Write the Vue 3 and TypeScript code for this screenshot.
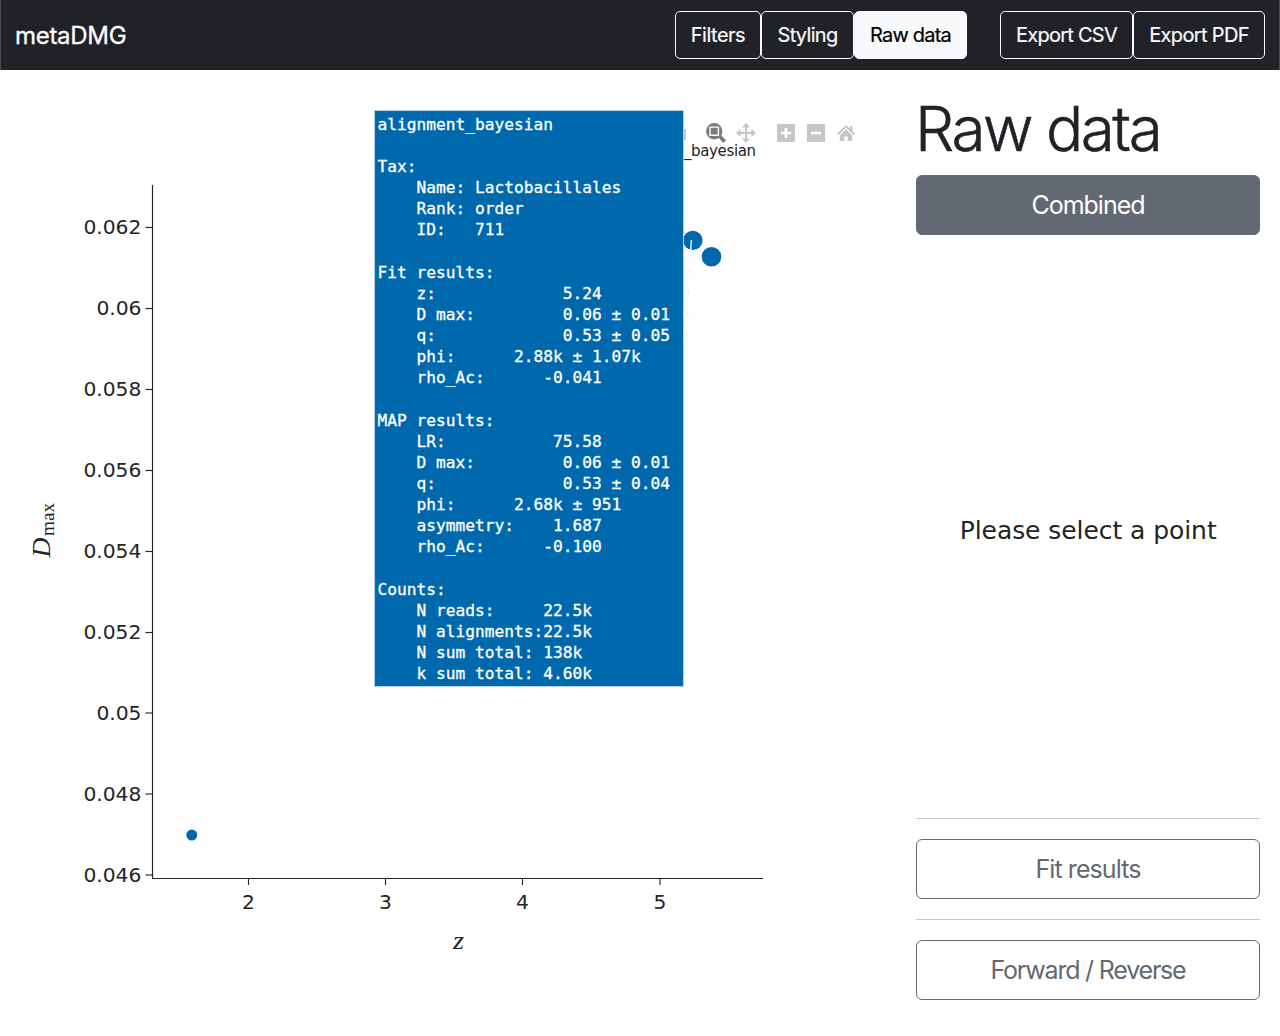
<script setup lang="ts">
interface Tick { pos: number; label: string }

const yTicks: Tick[] = ['0.062', '0.06', '0.058', '0.056', '0.054', '0.052', '0.05', '0.048', '0.046'].map(
  (label, i) => ({ label, pos: [157.5, 238.5, 319.5, 400.5, 481.5, 562.5, 643, 724, 805][i] }),
)
const xTicks: Tick[] = [
  { pos: 248.5, label: '2' },
  { pos: 385.5, label: '3' },
  { pos: 522.5, label: '4' },
  { pos: 660, label: '5' },
]

const hoverLines: string[] = [
  'alignment_bayesian',
  '',
  'Tax:',
  '    Name: Lactobacillales',
  '    Rank: order',
  '    ID:   711',
  '',
  'Fit results:',
  '    z:             5.24',
  '    D max:         0.06 ± 0.01',
  '    q:             0.53 ± 0.05',
  '    phi:      2.88k ± 1.07k',
  '    rho_Ac:      -0.041',
  '',
  'MAP results:',
  '    LR:           75.58',
  '    D max:         0.06 ± 0.01',
  '    q:             0.53 ± 0.04',
  '    phi:      2.68k ± 951',
  '    asymmetry:    1.687',
  '    rho_Ac:      -0.100',
  '',
  'Counts:',
  '    N reads:     22.5k',
  '    N alignments:22.5k',
  '    N sum total: 138k',
  '    k sum total: 4.60k',
]
const charWidth = 9.75
const labelWidth = (label: string): number => (label.length === 5 ? 58 : 45)
</script>

<template>
  <div class="app">
    <header class="navbar">
      <span class="brand">metaDMG</span>
      <nav class="group views">
        <button class="nav-btn filters">Filters</button>
        <button class="nav-btn styling">Styling</button>
        <button class="nav-btn raw active">Raw data</button>
      </nav>
      <nav class="group">
        <button class="nav-btn csv">Export CSV</button>
        <button class="nav-btn pdf">Export PDF</button>
      </nav>
    </header>

    <main class="content">
      <svg class="plot" width="896" height="966" viewBox="0 0 896 966">
        <g class="axis">
          <path d="M152.5 115V809M152 808.5H763" />
          <path v-for="t in yTicks" :key="t.label" :d="`M145.5 ${t.pos}H152`" />
          <path v-for="t in xTicks" :key="t.label" :d="`M${t.pos} 809V815`" />
        </g>
        <g class="tick-text">
          <text v-for="t in yTicks" :key="t.label" :x="141.4 - labelWidth(t.label)" :y="Math.floor(t.pos) + 7" :textLength="labelWidth(t.label)">{{ t.label }}</text>
          <text v-for="t in xTicks" :key="t.label" :x="t.pos" y="839" text-anchor="middle">{{ t.label }}</text>
        </g>
        <text class="math" x="453" y="878.5" textLength="11" lengthAdjust="spacingAndGlyphs">z</text>
        <g transform="translate(50 487.5) rotate(-90)">
          <text class="math" textLength="20" lengthAdjust="spacingAndGlyphs">D</text>
          <text class="math sub" x="21.5" y="4" textLength="33" lengthAdjust="spacingAndGlyphs">max</text>
        </g>

        <g class="points">
          <ellipse cx="191.8" cy="765" rx="5.4" ry="5.5" />
          <circle cx="692.8" cy="170.4" r="9.7" />
          <circle cx="711.5" cy="186.8" r="9.8" />
        </g>
        <path class="pointer" d="M691.5 170L690.6 180" />
        <path class="trace" d="M689.7 197V204M688.7 219V225M687.7 240V247M686.7 261V267" />
        <path class="wedge" d="M683 321H684L683 345Z" />

        <text class="legend" x="684" y="86" textLength="72">_bayesian</text>

        <g class="modebar">
          <path d="M683 59H686V70H683Z" />
          <g class="on">
            <path fill-rule="evenodd" d="M714.2 53A8.2 8.2 0 1 1 714.2 69.4A8.2 8.2 0 1 1 714.2 53ZM709.3 56.4V66H719.1V56.4Z" />
            <path d="M710.7 57.8H717.7V64.6H710.7ZM718.3 67.5L721 65L726 70.3L723.3 73Z" />
          </g>
          <path d="M746 53L750 57.5H747V61.8H751.5V59L756 63L751.5 67V64H747V68.5H750L746 73L742 68.5H745V64H740.5V67L736 63L740.5 59V61.8H745V57.5H742Z" />
          <path fill-rule="evenodd" d="M777 54H795V72H777ZM784.6 58V61.7H781V64.3H784.6V68H787.3V64.3H791V61.7H787.3V58Z" />
          <path fill-rule="evenodd" d="M807 54H825V72H807ZM811 61.7H821V64.3H811Z" />
          <path d="M846 55L850 58.8V56H852.5V61.2L855.2 63.7L853.8 65L846 57.8L838.3 65L837 63.7ZM846 59.3L852.2 65.2V71H847.7V66.5H844.3V71H839.8V65.2Z" />
        </g>

        <g class="hover">
          <rect x="374.5" y="40.5" width="309" height="576" />
          <template v-for="(line, i) in hoverLines" :key="i">
            <text v-if="line" :x="377.6 + (line.length - line.trimStart().length) * charWidth" :y="Math.floor(60.2 + i * 21.13)" :textLength="line.trimStart().length * charWidth">{{ line.trimStart() }}</text>
          </template>
        </g>
      </svg>

      <aside class="panel">
        <h1>Raw data</h1>
        <button class="wide solid">Combined</button>
        <div class="empty"><svg width="344" height="40"><text x="43.7" y="29" textLength="257">Please select a point</text></svg></div>
        <hr />
        <button class="wide fit">Fit results</button>
        <hr />
        <button class="wide forward">Forward / Reverse</button>
      </aside>
    </main>
  </div>
</template>

<style>
body { margin: 0; background: #fff; }
</style>

<style scoped>
.app { width: 1280px; height: 1036px; overflow: hidden; font-family: Inter, "Liberation Sans", sans-serif; color: #212227; }
.navbar { box-sizing: border-box; height: 70px; background: #212227; display: flex; align-items: center; border-left: 1px solid #4b4c50; border-right: 1px solid #4b4c50; padding: 0 14px; }
.brand { color: #fff; font-size: 24px; letter-spacing: -0.3px; line-height: 30px; margin: 2px auto 0 0; -webkit-text-stroke: 0.3px #fff; }
.group { display: flex; }
.views { margin-right: 33px; }
.nav-btn { box-sizing: border-box; height: 48px; padding: 0; border: 1px solid #f8f9fa; border-radius: 5px; background: none; color: #f8f9fa; font: 400 20px/30px Inter, "Liberation Sans", sans-serif; letter-spacing: -0.5px; white-space: nowrap; -webkit-text-stroke: 0.2px currentColor; }
.active { background: #f8f9fa; color: #000; }
.filters { width: 86px; }
.styling { width: 93px; letter-spacing: -0.7px; }
.raw { width: 113px; letter-spacing: -0.8px; }
.csv { width: 133px; letter-spacing: -0.75px; }
.pdf { width: 132px; letter-spacing: -0.65px; }
.content { display: flex; height: 966px; }
.plot { display: block; flex: none; overflow: hidden; }
.axis path { stroke: #242424; stroke-width: 1.15; fill: none; }
.tick-text { font: 20.3px "DejaVu Sans", sans-serif; fill: #242424; }
.math { font: italic 25px "Liberation Serif", serif; fill: #242424; }
.sub { font-style: normal; font-size: 18px; }
.points { fill: #0068ac; }
.pointer { stroke: #e7f1f7; stroke-width: 1.5; }
.trace { stroke: #dbe8f0; stroke-width: 0.8; }
.wedge { fill: #0068ac; }
.legend { font: 15px "DejaVu Sans", sans-serif; fill: #242424; }
.modebar { fill: #c6c6c6; }
.on { fill: #7b7b7b; }
.hover rect { fill: #0068ac; stroke: #b5d5e6; stroke-width: 1; }
.hover text { font: 16.2px "DejaVu Sans Mono", monospace; fill: #fff; stroke: #fff; stroke-width: 0.3; white-space: pre; }
.panel { width: 344px; margin-left: 20px; display: flex; flex-direction: column; }
h1 { margin: 20px 0 8px -1px; height: 77px; font-size: 62px; line-height: 77px; font-weight: 300; letter-spacing: -2.5px; white-space: nowrap; -webkit-text-stroke: 0.5px #212227; }
.wide { box-sizing: border-box; height: 60px; flex: none; padding: 0; border: 1px solid #626972; border-radius: 6px; background: #fff; color: #626972; font: 400 25px/38px Inter, "Liberation Sans", sans-serif; letter-spacing: -0.9px; }
.solid { background: #626972; color: #fff; letter-spacing: -1px; }
.forward { letter-spacing: -1.2px; }
.empty { height: 583px; display: flex; align-items: center; }
.empty svg { display: block; margin-top: 7px; }
.empty text { font: 25px "DejaVu Sans", sans-serif; fill: #242424; }
hr { width: 100%; height: 1px; margin: 0 0 20px; border: 0; background: #c7c8c9; flex: none; }
.fit { margin-bottom: 20px; }
</style>
